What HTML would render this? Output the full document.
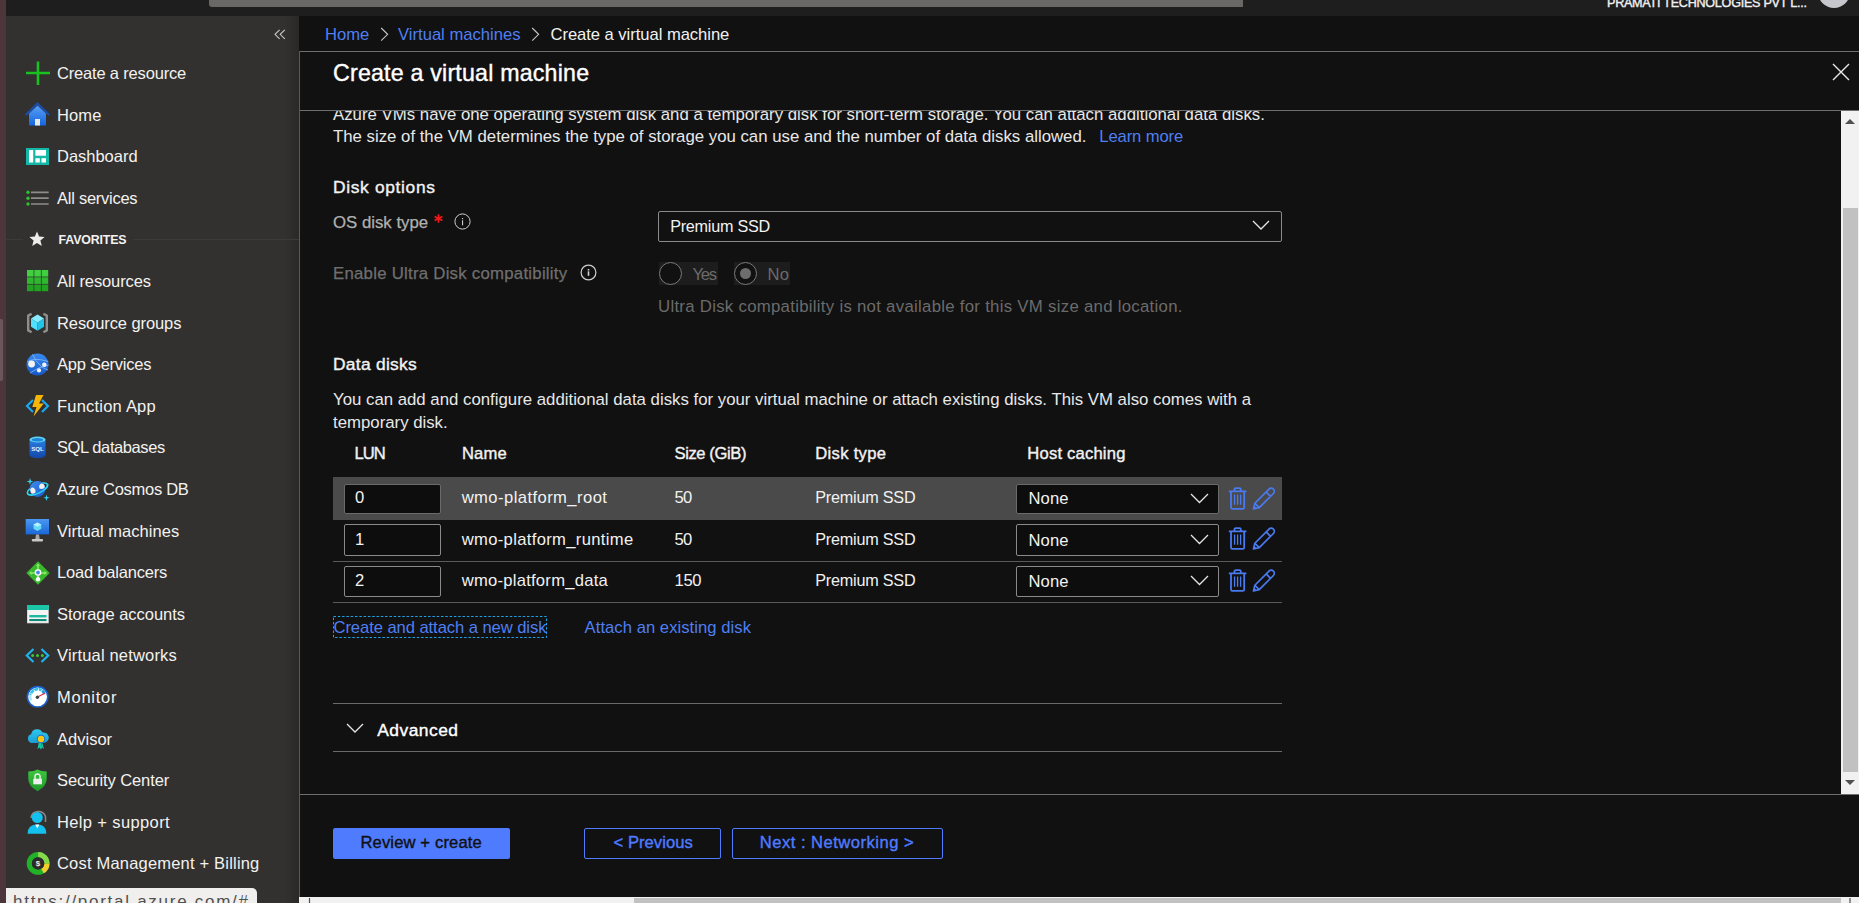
<!DOCTYPE html>
<html><head><meta charset="utf-8"><style>
html,body{margin:0;padding:0;width:1859px;height:903px;overflow:hidden;background:#111;}
body{position:relative;font-family:"Liberation Sans", sans-serif;}
.t{position:absolute;white-space:nowrap;}
.r{position:absolute;display:block;}
</style></head><body>
<div class="r" style="left:0px;top:0px;width:1859px;height:903px;background:#111111"></div>
<div class="r" style="left:0px;top:0px;width:6px;height:903px;background:#4d363b"></div>
<div class="r" style="left:0px;top:319px;width:3px;height:62px;background:#6a575b;border-radius:0 2px 2px 0"></div>
<div class="r" style="left:6px;top:0px;width:1853px;height:16px;background:#1e1e1e"></div>
<div class="r" style="left:209px;top:0px;width:1034px;height:7px;background:#696866;border-radius:0 0 0 3px"></div>
<div class="r" style="left:6px;top:16px;width:293px;height:887px;background:#32312f"></div>
<div class="r" style="left:285px;top:16px;width:14px;height:887px;background:linear-gradient(90deg,rgba(0,0,0,0),rgba(0,0,0,0.18))"></div>
<div class="t" style="left:1607px;top:-3.00px;font-size:12.6px;line-height:12.6px;color:#f0f0f0;-webkit-text-stroke:0.38px #f0f0f0;letter-spacing:-0.259px;">PRAMATI TECHNOLOGIES PVT L...</div>
<div class="r" style="left:1818px;top:-24px;width:32px;height:32px;border-radius:50%;background:#c5c7cc"></div>
<svg class="r" style="left:274px;top:29px" width="12" height="11" viewBox="0 0 12 11"><path d="M5.6 0.8 L1 5.3 L5.6 9.8 M10.8 0.8 L6.2 5.3 L10.8 9.8" fill="none" stroke="#c8c8c8" stroke-width="1.1"/></svg>
<div class="t" style="left:57px;top:65.00px;font-size:16.5px;line-height:16.5px;color:#f3f2f1;letter-spacing:-0.179px;">Create a resource</div>
<div class="t" style="left:57px;top:107.00px;font-size:16.5px;line-height:16.5px;color:#f3f2f1;letter-spacing:0.128px;">Home</div>
<div class="t" style="left:57px;top:148.00px;font-size:16.5px;line-height:16.5px;color:#f3f2f1;letter-spacing:-0.015px;">Dashboard</div>
<div class="t" style="left:57px;top:190.00px;font-size:16.5px;line-height:16.5px;color:#f3f2f1;letter-spacing:-0.258px;">All services</div>
<div class="t" style="left:58.6px;top:234.00px;font-size:12.4px;line-height:12.4px;color:#f2f2f2;font-weight:bold;letter-spacing:-0.170px;">FAVORITES</div>
<div class="t" style="left:57px;top:273.00px;font-size:16.5px;line-height:16.5px;color:#f3f2f1;letter-spacing:-0.114px;">All resources</div>
<div class="t" style="left:57px;top:315.00px;font-size:16.5px;line-height:16.5px;color:#f3f2f1;letter-spacing:-0.090px;">Resource groups</div>
<div class="t" style="left:57px;top:356.00px;font-size:16.5px;line-height:16.5px;color:#f3f2f1;letter-spacing:-0.256px;">App Services</div>
<div class="t" style="left:57px;top:398.00px;font-size:16.5px;line-height:16.5px;color:#f3f2f1;letter-spacing:0.216px;">Function App</div>
<div class="t" style="left:57px;top:439.00px;font-size:16.5px;line-height:16.5px;color:#f3f2f1;letter-spacing:-0.411px;">SQL databases</div>
<div class="t" style="left:57px;top:481.00px;font-size:16.5px;line-height:16.5px;color:#f3f2f1;letter-spacing:-0.279px;">Azure Cosmos DB</div>
<div class="t" style="left:57px;top:523.00px;font-size:16.5px;line-height:16.5px;color:#f3f2f1;letter-spacing:0.035px;">Virtual machines</div>
<div class="t" style="left:57px;top:564.00px;font-size:16.5px;line-height:16.5px;color:#f3f2f1;letter-spacing:-0.203px;">Load balancers</div>
<div class="t" style="left:57px;top:606.00px;font-size:16.5px;line-height:16.5px;color:#f3f2f1;letter-spacing:-0.028px;">Storage accounts</div>
<div class="t" style="left:57px;top:647.00px;font-size:16.5px;line-height:16.5px;color:#f3f2f1;letter-spacing:0.181px;">Virtual networks</div>
<div class="t" style="left:57px;top:689.00px;font-size:16.5px;line-height:16.5px;color:#f3f2f1;letter-spacing:0.730px;">Monitor</div>
<div class="t" style="left:57px;top:731.00px;font-size:16.5px;line-height:16.5px;color:#f3f2f1;letter-spacing:0.013px;">Advisor</div>
<div class="t" style="left:57px;top:772.00px;font-size:16.5px;line-height:16.5px;color:#f3f2f1;letter-spacing:-0.108px;">Security Center</div>
<div class="t" style="left:57px;top:814.00px;font-size:16.5px;line-height:16.5px;color:#f3f2f1;letter-spacing:0.371px;">Help + support</div>
<div class="t" style="left:57px;top:855.00px;font-size:16.5px;line-height:16.5px;color:#f3f2f1;letter-spacing:0.194px;">Cost Management + Billing</div>
<svg class="r" style="left:25px;top:60px" width="26" height="26" viewBox="0 0 26 26"><path d="M13 1.5 V25 M1 13 H25" stroke="#19c21e" stroke-width="2.6"/></svg>
<svg class="r" style="left:25px;top:102px" width="25" height="24" viewBox="0 0 25 24"><defs><linearGradient id="hg" x1="0" y1="0" x2="0" y2="1"><stop offset="0" stop-color="#5aa0f5"/><stop offset="1" stop-color="#1466e0"/></linearGradient></defs><path d="M4 11.5 L12.5 3.5 L21 11.5 V23.5 H4 Z" fill="url(#hg)"/><path d="M0.8 13 L12.5 1.5 L24.2 13" fill="none" stroke="#1a4fb0" stroke-width="2"/><rect x="10" y="17" width="5" height="6.5" fill="#e8e8e8"/></svg>
<svg class="r" style="left:26px;top:148px" width="23" height="17" viewBox="0 0 23 17"><rect x="0" y="0" width="23" height="17" fill="#14b8a6"/><rect x="3" y="2" width="4.2" height="12.5" fill="#fff"/><rect x="9.4" y="2" width="10.6" height="5.7" fill="#fff"/><rect x="9.4" y="10.2" width="4.4" height="4.3" fill="#fff"/><rect x="15.5" y="10.2" width="4.5" height="4.3" fill="#fff"/></svg>
<svg class="r" style="left:26px;top:190px" width="24" height="16" viewBox="0 0 24 16"><circle cx="2" cy="2.3" r="1.7" fill="#2ec02e"/><circle cx="2" cy="8.2" r="1.7" fill="#2ec02e"/><circle cx="2" cy="14" r="1.7" fill="#2ec02e"/><path d="M5 2.3 H22.7 M5 8.2 H22.7 M5 14 H22.7" stroke="#8c8c8c" stroke-width="1.7"/></svg>
<svg class="r" style="left:29px;top:231px" width="16" height="16" viewBox="0 0 16 16"><path d="M8 0.5 L10.1 5.6 L15.6 5.9 L11.4 9.4 L12.8 14.9 L8 11.9 L3.2 14.9 L4.6 9.4 L0.4 5.9 L5.9 5.6 Z" fill="#ececec"/></svg>
<svg class="r" style="left:26.8px;top:270px" width="22" height="22" viewBox="0 0 22 22"><rect x="0.0" y="0.0" width="6.6" height="6.6" fill="#3fcf3f"/><rect x="7.3" y="0.0" width="6.6" height="6.6" fill="#3fcf3f"/><rect x="14.6" y="0.0" width="6.6" height="6.6" fill="#3fcf3f"/><rect x="0.0" y="7.3" width="6.6" height="6.6" fill="#2fb82f"/><rect x="7.3" y="7.3" width="6.6" height="6.6" fill="#2fb82f"/><rect x="14.6" y="7.3" width="6.6" height="6.6" fill="#2fb82f"/><rect x="0.0" y="14.6" width="6.6" height="6.6" fill="#22a322"/><rect x="7.3" y="14.6" width="6.6" height="6.6" fill="#22a322"/><rect x="14.6" y="14.6" width="6.6" height="6.6" fill="#22a322"/></svg>
<svg class="r" style="left:26px;top:312px" width="23" height="22" viewBox="0 0 23 22"><path d="M5.6 1.8 L2.2 3.6 V18.4 L5.6 20.2 M17.4 1.8 L20.8 3.6 V18.4 L17.4 20.2" fill="none" stroke="#8e8e8e" stroke-width="2.4" stroke-linejoin="round"/><path d="M11.5 2.6 L18 6.6 L11.5 10.7 L5 6.6 Z" fill="#86ecff"/><path d="M5 6.6 L11.5 10.7 V18.8 L5 14.8 Z" fill="#50e0ff"/><path d="M18 6.6 L11.5 10.7 V18.8 L18 14.8 Z" fill="#22c3ea"/></svg>
<svg class="r" style="left:26px;top:353px" width="23" height="23" viewBox="0 0 23 23"><defs><linearGradient id="ag" x1="0" y1="0" x2="0" y2="1"><stop offset="0" stop-color="#3a8af0"/><stop offset="1" stop-color="#1558c8"/></linearGradient></defs><circle cx="11.5" cy="11.5" r="11" fill="url(#ag)"/><path d="M6.5 1.2 Q9 8 15 13 Q18 16 22 17 M1 9 Q8 4 22.3 8.5 M4 20 Q12 14 22.5 12" fill="none" stroke="#8cc0fa" stroke-width="1" opacity="0.75"/><circle cx="5.6" cy="11" r="3.4" fill="#f2f2f2"/><circle cx="18.3" cy="11.8" r="2.2" fill="#f2f2f2"/><circle cx="13" cy="17.4" r="2.1" fill="#f2f2f2"/></svg>
<svg class="r" style="left:25px;top:394px" width="25" height="24" viewBox="0 0 25 24"><path d="M8 6 L2 12 L8 18 M17 6 L23 12 L17 18" fill="none" stroke="#1aa9ef" stroke-width="2.2"/><path d="M11 1 H18.5 L14 9.5 H18.8 L8.5 22.5 L11.5 13 H7.3 Z" fill="#f5b60c"/></svg>
<svg class="r" style="left:29px;top:436px" width="17" height="23" viewBox="0 0 17 23"><defs><linearGradient id="sg" x1="0" y1="0" x2="0" y2="1"><stop offset="0" stop-color="#2a7fe0"/><stop offset="1" stop-color="#1346a8"/></linearGradient></defs><path d="M0.5 3.5 V19 A8 3.3 0 0 0 16.5 19 V3.5 Z" fill="url(#sg)"/><ellipse cx="8.5" cy="3.5" rx="8" ry="3" fill="#5fd2f5"/><ellipse cx="8.5" cy="3.8" rx="5.8" ry="1.8" fill="#1e86d8"/><text x="8.5" y="14.6" font-family="Liberation Sans" font-weight="bold" font-size="6.2" fill="#e8f0ff" text-anchor="middle">SQL</text></svg>
<svg class="r" style="left:25px;top:477px" width="25" height="25" viewBox="0 0 25 25"><defs><linearGradient id="cog" x1="0" y1="0" x2="1" y2="1"><stop offset="0" stop-color="#3c8ef0"/><stop offset="1" stop-color="#1a5cc8"/></linearGradient></defs><path d="M5 1 L5.8 3.7 L8.5 4.5 L5.8 5.3 L5 8 L4.2 5.3 L1.5 4.5 L4.2 3.7 Z" fill="#32d4f5"/><path d="M21.5 17.5 L22.2 20 L24.5 20.8 L22.2 21.6 L21.5 24 L20.8 21.6 L18.5 20.8 L20.8 20 Z" fill="#32d4f5"/><g transform="rotate(-25 12.5 12)"><ellipse cx="12.5" cy="12" rx="11" ry="4.2" fill="none" stroke="#2ad3f2" stroke-width="1.5"/></g><circle cx="12.5" cy="12" r="7.9" fill="url(#cog)"/><path d="M5.2 12.5 Q6.5 9.5 9 11 Q11 12.5 10.5 15.5 Q8 17.5 6 16 Z" fill="#f0f0f0"/><path d="M14 9 Q15.5 5.5 18.5 7 Q20.5 9 19.5 11 Q16.5 12.5 14.5 11.5 Z" fill="#f0f0f0"/><g transform="rotate(-25 12.5 12)"><path d="M1.5 12 A11 4.2 0 0 0 23.5 12" fill="none" stroke="#2ad3f2" stroke-width="1.5"/></g></svg>
<svg class="r" style="left:25px;top:518px" width="25" height="24" viewBox="0 0 25 24"><defs><linearGradient id="vg" x1="0" y1="0" x2="0" y2="1"><stop offset="0" stop-color="#4a98f2"/><stop offset="1" stop-color="#1a66d8"/></linearGradient></defs><rect x="0.7" y="1" width="23.3" height="15.4" fill="url(#vg)"/><path d="M11 16.4 H14 L14.8 21.5 H10.2 Z" fill="#a8a8a8"/><rect x="6.8" y="21" width="11.2" height="2.4" rx="0.8" fill="#c8c8c8"/><path d="M12.4 4.5 L16.3 6.6 V10.8 L12.4 12.9 L8.5 10.8 V6.6 Z" fill="#66d9f7"/><path d="M8.5 6.6 L12.4 8.7 L16.3 6.6 L12.4 4.5 Z" fill="#b5f0ff"/></svg>
<svg class="r" style="left:25.5px;top:561px" width="24" height="24" viewBox="0 0 24 24"><path d="M12 0.3 L23.7 12 L12 23.7 L0.3 12 Z" fill="#38b82c"/><path d="M12 3.5 V9 M4 12 H9 M15 12 H20" stroke="#8ee86a" stroke-width="1.6"/><path d="M12 2.5 L10 5 H14 Z M3 12 L5.5 10 V14 Z M21 12 L18.5 10 V14 Z" fill="#8ee86a"/><circle cx="12" cy="11.5" r="3.3" fill="#fff"/><circle cx="12" cy="11.5" r="1.9" fill="#4a86e8"/><path d="M12 14.5 V17" stroke="#fff" stroke-width="1.2"/><circle cx="12" cy="18.3" r="2.2" fill="#fff"/></svg>
<svg class="r" style="left:26.6px;top:605px" width="22" height="19" viewBox="0 0 22 19"><rect x="0" y="0" width="21.8" height="18.3" fill="#cfcfcf"/><rect x="0.8" y="5" width="20.2" height="12.6" fill="#f4f4f4"/><rect x="0" y="0" width="21.8" height="5" fill="#1bc6a8"/><rect x="2.3" y="10" width="17.2" height="2.4" fill="#1ab9a0"/><rect x="2.3" y="14" width="17.2" height="2.1" fill="#0f8a78"/></svg>
<svg class="r" style="left:25px;top:648px" width="25" height="15" viewBox="0 0 25 15"><path d="M8.5 1 L1.8 7.5 L8.5 14 M16.5 1 L23.2 7.5 L16.5 14" fill="none" stroke="#1db4ee" stroke-width="2.2"/><circle cx="7.6" cy="7.5" r="1.5" fill="#3cc83c"/><circle cx="12.5" cy="7.5" r="1.5" fill="#3cc83c"/><circle cx="17.4" cy="7.5" r="1.5" fill="#3cc83c"/></svg>
<svg class="r" style="left:26px;top:685px" width="23" height="23" viewBox="0 0 23 23"><circle cx="11.6" cy="11.8" r="10.2" fill="#fff" stroke="#1a62d2" stroke-width="1.6"/><path d="M11.6 11.8 L3.2 9.8 A8.6 8.6 0 0 1 16.5 4.3 Z" fill="#38c0e8"/><path d="M11.6 11.8 L3.2 9.8 A8.6 8.6 0 0 0 4.2 16 Z" fill="#a8e4f5"/><path d="M11.6 11.8 L16.5 4.3 A8.6 8.6 0 0 1 19.8 8.5 Z" fill="#1c9ad6"/><path d="M4.5 8.5 L11.6 11.8 M8 5 L11.6 11.8 M12.5 3.5 L11.6 11.8 M16.5 4.5 L11.6 11.8" stroke="#fff" stroke-width="0.9"/><circle cx="11.6" cy="11.8" r="6.2" fill="#fff"/><path d="M11.6 12 L18.8 8.2" stroke="#e8304a" stroke-width="1.3"/><circle cx="11.4" cy="12.2" r="1.7" fill="#444"/></svg>
<svg class="r" style="left:26.5px;top:727.5px" width="22" height="22" viewBox="0 0 22 22"><defs><linearGradient id="cg" x1="0" y1="0" x2="0" y2="1"><stop offset="0" stop-color="#2ec8ef"/><stop offset="1" stop-color="#1a9fd6"/></linearGradient></defs><path d="M5 15 A4.5 4.5 0 0 1 4.2 6.2 A6 6 0 0 1 15.5 4.5 A5 5 0 0 1 17.5 14.8 Z" fill="url(#cg)"/><path d="M12 13.5 L10.5 21 L12.6 19.5 L14 21.5 L14.5 14 Z M15 13.5 L17 21 L15.3 19.6 L14 21.5 Z" fill="#17c7a8"/><circle cx="14" cy="11" r="4.3" fill="#1f6fd0"/><circle cx="14" cy="11" r="3.2" fill="#ffc60a"/></svg>
<svg class="r" style="left:28px;top:769px" width="19" height="23" viewBox="0 0 19 23"><defs><linearGradient id="shg" x1="0" y1="0" x2="0" y2="1"><stop offset="0" stop-color="#3cc83c"/><stop offset="1" stop-color="#1e9a2a"/></linearGradient></defs><path d="M9.5 0.5 Q13 2.5 18.7 2.5 V10 Q18.7 17 9.5 22.2 Q0.3 17 0.3 10 V2.5 Q6 2.5 9.5 0.5 Z" fill="url(#shg)"/><path d="M7 10 V7.6 A2.55 2.55 0 0 1 12.1 7.6 V10" fill="none" stroke="#eee" stroke-width="1.5"/><rect x="5.3" y="9.7" width="8.6" height="5.6" fill="#eee"/></svg>
<svg class="r" style="left:27px;top:809px" width="20" height="26" viewBox="0 0 20 26"><path d="M4 9 A7.5 7.5 0 0 1 18.5 7.5 V13" fill="none" stroke="#8a8a8a" stroke-width="1.5"/><circle cx="10.3" cy="8.5" r="5.5" fill="#14c0ee"/><path d="M0.6 24.8 Q0.6 15.5 10.3 15.5 Q19.3 15.5 19.3 24.8 Z" fill="#14c0ee"/><path d="M8.3 15.6 L10.3 19.5 L12.3 15.6 Z" fill="#fff"/></svg>
<svg class="r" style="left:25.5px;top:851px" width="24" height="25" viewBox="0 0 24 25"><circle cx="12.1" cy="12.4" r="8.8" fill="none" stroke="#22b22a" stroke-width="5.2"/><path d="M12.1 3.6 A8.8 8.8 0 0 1 20.9 12.4" fill="none" stroke="#86d94a" stroke-width="5.2"/><path d="M20.9 12.4 A8.8 8.8 0 0 1 16.5 20" fill="none" stroke="#f2cf2a" stroke-width="5.2"/><circle cx="12.1" cy="12.4" r="6.2" fill="#2a2a2a"/><text x="12.1" y="15.4" font-family="Liberation Sans" font-weight="bold" font-size="8" fill="#f0f0f0" text-anchor="middle">$</text></svg>
<div class="r" style="left:6px;top:239px;width:17px;height:1px;background:#3c3b39"></div>
<div class="r" style="left:133px;top:239px;width:166px;height:1px;background:#3c3b39"></div>
<div class="t" style="left:325px;top:27.00px;font-size:16.6px;line-height:16.6px;color:#4f7ff2;letter-spacing:0.006px;">Home</div>
<svg class="r" style="left:380px;top:27px" width="9" height="15" viewBox="0 0 9 15"><path d="M1.2 1 L7.6 7.3 L1.2 13.6" fill="none" stroke="#c8c8c8" stroke-width="1.1"/></svg>
<div class="t" style="left:398px;top:27.00px;font-size:16.6px;line-height:16.6px;color:#4f7ff2;letter-spacing:0.012px;">Virtual machines</div>
<svg class="r" style="left:531px;top:27px" width="9" height="15" viewBox="0 0 9 15"><path d="M1.2 1 L7.6 7.3 L1.2 13.6" fill="none" stroke="#c8c8c8" stroke-width="1.1"/></svg>
<div class="t" style="left:550.5px;top:27.00px;font-size:16.6px;line-height:16.6px;color:#f2f2f2;letter-spacing:-0.044px;">Create a virtual machine</div>
<div class="r" style="left:299px;top:51px;width:1560px;height:1px;background:#6e6e6e"></div>
<div class="r" style="left:299px;top:51px;width:1px;height:852px;background:#5a5a5a"></div>
<div class="r" style="left:300px;top:110px;width:1559px;height:1px;background:#6e6e6e"></div>
<div class="t" style="left:333px;top:62.00px;font-size:23.2px;line-height:23.2px;color:#ffffff;-webkit-text-stroke:0.38px #ffffff;letter-spacing:0.206px;">Create a virtual machine</div>
<svg class="r" style="left:1832px;top:63px" width="18" height="18" viewBox="0 0 18 18"><path d="M1 1 L17 17 M17 1 L1 17" stroke="#e8e8e8" stroke-width="1.4"/></svg>
<div class="r" style="left:300px;top:111px;width:1559px;height:683px;overflow:hidden">
<div class="t" style="left:33px;top:-4.00px;font-size:16.8px;line-height:16.8px;color:#e8e8e8;letter-spacing:0.008px;">Azure VMs have one operating system disk and a temporary disk for short-term storage. You can attach additional data disks.</div>
<div class="t" style="left:33px;top:18.00px;font-size:16.8px;line-height:16.8px;color:#e8e8e8;letter-spacing:-0.003px;">The size of the VM determines the type of storage you can use and the number of data disks allowed.</div>
<div class="t" style="left:799.3px;top:18.00px;font-size:16.6px;line-height:16.6px;color:#4f7ff2;letter-spacing:-0.110px;">Learn more</div>
<div class="t" style="left:33px;top:68.00px;font-size:17.4px;line-height:17.4px;color:#f2f2f2;-webkit-text-stroke:0.38px #f2f2f2;letter-spacing:0.657px;">Disk options</div>
<div class="t" style="left:33px;top:104.00px;font-size:16.8px;line-height:16.8px;color:#b0b0b0;-webkit-text-stroke:0.25px #b0b0b0;letter-spacing:-0.004px;">OS disk type</div>
<svg class="r" style="left:134px;top:103px" width="9" height="9" viewBox="0 0 9 9"><path d="M4.5 0.3 V8.7 M0.6 2.4 L8.4 6.6 M8.4 2.4 L0.6 6.6" stroke="#f01818" stroke-width="1.7"/></svg>
<svg class="r" style="left:154.0px;top:102.0px" width="17" height="17" viewBox="0 0 17 17"><circle cx="8.5" cy="8.5" r="7.6" fill="none" stroke="#d0d0d0" stroke-width="1"/><rect x="8" y="5" width="1.1" height="1.2" fill="#d0d0d0"/><rect x="8" y="7.3" width="1.1" height="5" fill="#d0d0d0"/></svg>
<div class="r" style="left:358px;top:100px;width:624px;height:31px;box-sizing:border-box;border:1px solid #8a8a8a;border-radius:2px;background:#111"></div>
<div class="t" style="left:370.20000000000005px;top:107.00px;font-size:16.2px;line-height:16.2px;color:#f2f2f2;letter-spacing:-0.252px;">Premium SSD</div>
<svg class="r" style="left:952px;top:109px" width="18" height="11" viewBox="0 0 18 11"><path d="M1 1 L9 9 L17 1" fill="none" stroke="#e6e6e6" stroke-width="1.3"/></svg>
<div class="t" style="left:33px;top:155.00px;font-size:16.8px;line-height:16.8px;color:#6f6f6f;-webkit-text-stroke:0.25px #6f6f6f;letter-spacing:0.250px;">Enable Ultra Disk compatibility</div>
<svg class="r" style="left:279.5px;top:152.5px" width="17" height="17" viewBox="0 0 17 17"><circle cx="8.5" cy="8.5" r="7.4" fill="none" stroke="#d0d0d0" stroke-width="1.2"/><rect x="7.7" y="5" width="1.6" height="1.5" fill="#d0d0d0"/><rect x="7.7" y="7.3" width="1.6" height="4.5" fill="#d0d0d0"/></svg>
<div class="r" style="left:359px;top:151px;width:59px;height:23px;background:#1d1d1d"></div>
<div class="r" style="left:434px;top:151px;width:56px;height:23px;background:#1d1d1d"></div>
<div class="r" style="left:359px;top:151px;width:23px;height:23px;box-sizing:border-box;border:1px solid #7a7a7a;border-radius:50%;background:#111"></div>
<div class="r" style="left:434px;top:151px;width:23px;height:23px;box-sizing:border-box;border:1px solid #7a7a7a;border-radius:50%;background:#111"></div>
<div class="r" style="left:440px;top:157px;width:11px;height:11px;border-radius:50%;background:#6e6e6e"></div>
<div class="t" style="left:392.6px;top:156.00px;font-size:16.6px;line-height:16.6px;color:#6b6b6b;letter-spacing:-1.341px;">Yes</div>
<div class="t" style="left:467.4px;top:156.00px;font-size:16.6px;line-height:16.6px;color:#6b6b6b;letter-spacing:0.379px;">No</div>
<div class="t" style="left:358px;top:188.00px;font-size:16.8px;line-height:16.8px;color:#6b6b6b;letter-spacing:0.280px;">Ultra Disk compatibility is not available for this VM size and location.</div>
<div class="t" style="left:33px;top:245.00px;font-size:17.4px;line-height:17.4px;color:#f2f2f2;-webkit-text-stroke:0.38px #f2f2f2;letter-spacing:0.285px;">Data disks</div>
<div class="t" style="left:33px;top:281.00px;font-size:16.8px;line-height:16.8px;color:#e8e8e8;letter-spacing:0.001px;">You can add and configure additional data disks for your virtual machine or attach existing disks. This VM also comes with a</div>
<div class="t" style="left:33px;top:304.00px;font-size:16.8px;line-height:16.8px;color:#e8e8e8;letter-spacing:-0.003px;">temporary disk.</div>
<div class="t" style="left:54.5px;top:335.00px;font-size:16.6px;line-height:16.6px;color:#f2f2f2;-webkit-text-stroke:0.38px #f2f2f2;letter-spacing:-1.005px;">LUN</div>
<div class="t" style="left:162px;top:335.00px;font-size:16.6px;line-height:16.6px;color:#f2f2f2;-webkit-text-stroke:0.38px #f2f2f2;letter-spacing:0.139px;">Name</div>
<div class="t" style="left:374.5px;top:335.00px;font-size:16.6px;line-height:16.6px;color:#f2f2f2;-webkit-text-stroke:0.38px #f2f2f2;letter-spacing:-0.404px;">Size (GiB)</div>
<div class="t" style="left:515.3px;top:335.00px;font-size:16.6px;line-height:16.6px;color:#f2f2f2;-webkit-text-stroke:0.38px #f2f2f2;letter-spacing:0.304px;">Disk type</div>
<div class="t" style="left:727.3px;top:335.00px;font-size:16.6px;line-height:16.6px;color:#f2f2f2;-webkit-text-stroke:0.38px #f2f2f2;letter-spacing:0.194px;">Host caching</div>
<div class="r" style="left:33px;top:366px;width:949px;height:43px;background:#4a4a4a"></div>
<div class="r" style="left:33px;top:450px;width:949px;height:1px;background:#5a5a5a"></div>
<div class="r" style="left:33px;top:491px;width:949px;height:1px;background:#5a5a5a"></div>
<div class="r" style="left:43.5px;top:373px;width:97px;height:30px;box-sizing:border-box;border:1px solid #6a6a6a;border-radius:2px;background:#0d0d0d"></div>
<div class="t" style="left:55px;top:379.00px;font-size:16.6px;line-height:16.6px;color:#f2f2f2;">0</div>
<div class="t" style="left:161.7px;top:379.00px;font-size:16.6px;line-height:16.6px;color:#f2f2f2;letter-spacing:0.432px;">wmo-platform_root</div>
<div class="t" style="left:374.5px;top:379.00px;font-size:16.6px;line-height:16.6px;color:#f2f2f2;letter-spacing:-0.765px;">50</div>
<div class="t" style="left:515.3px;top:378.00px;font-size:16.2px;line-height:16.2px;color:#f2f2f2;letter-spacing:-0.222px;">Premium SSD</div>
<div class="r" style="left:716px;top:373px;width:203px;height:30px;box-sizing:border-box;border:1px solid #6a6a6a;border-radius:2px;background:#0d0d0d"></div>
<div class="t" style="left:728.5999999999999px;top:380.00px;font-size:16.6px;line-height:16.6px;color:#f2f2f2;letter-spacing:0.038px;">None</div>
<svg class="r" style="left:890px;top:381.5px" width="19" height="11" viewBox="0 0 19 11"><path d="M1 1 L9.5 9.5 L18 1" fill="none" stroke="#e6e6e6" stroke-width="1.3"/></svg>
<svg class="r" style="left:928px;top:373px" width="20" height="26" viewBox="0 0 20 26"><path d="M0.8 7.4 H18.4 M6.4 7.4 V5.6 Q6.4 4.2 7.8 4.2 H11.4 Q12.8 4.2 12.8 5.6 V7.4" fill="none" stroke="#4a7af0" stroke-width="1.8"/><path d="M3 7.4 V23.4 Q3 24.8 4.4 24.8 H14.8 Q16.2 24.8 16.2 23.4 V7.4" fill="none" stroke="#4a7af0" stroke-width="1.8"/><path d="M6.6 10.4 V20.8 M9.6 10.4 V20.8 M12.6 10.4 V20.8" stroke="#4a7af0" stroke-width="1.3"/></svg>
<svg class="r" style="left:952px;top:374px" width="24" height="26" viewBox="0 0 24 26"><path d="M1.5 24 L2.85 18.27 L17.0 4.1 A3.1 3.1 0 0 1 21.4 8.5 L7.23 22.65 Z M2.85 18.27 L7.23 22.65 M14.16 6.96 L18.54 11.34" fill="none" stroke="#4a7af0" stroke-width="1.7" stroke-linejoin="round"/><path d="M1.3 24.2 L2.1 20.6 L4.9 23.4 Z" fill="#4a7af0"/></svg>
<div class="r" style="left:43.5px;top:413px;width:97px;height:32px;box-sizing:border-box;border:1px solid #8a8a8a;border-radius:2px;background:#0d0d0d"></div>
<div class="t" style="left:55px;top:421.00px;font-size:16.6px;line-height:16.6px;color:#f2f2f2;">1</div>
<div class="t" style="left:161.7px;top:421.00px;font-size:16.6px;line-height:16.6px;color:#f2f2f2;letter-spacing:0.340px;">wmo-platform_runtime</div>
<div class="t" style="left:374.5px;top:421.00px;font-size:16.6px;line-height:16.6px;color:#f2f2f2;letter-spacing:-0.765px;">50</div>
<div class="t" style="left:515.3px;top:420.00px;font-size:16.2px;line-height:16.2px;color:#f2f2f2;letter-spacing:-0.222px;">Premium SSD</div>
<div class="r" style="left:716px;top:413px;width:203px;height:32px;box-sizing:border-box;border:1px solid #8a8a8a;border-radius:2px;background:#0d0d0d"></div>
<div class="t" style="left:728.5999999999999px;top:422.00px;font-size:16.6px;line-height:16.6px;color:#f2f2f2;letter-spacing:0.038px;">None</div>
<svg class="r" style="left:890px;top:422.5px" width="19" height="11" viewBox="0 0 19 11"><path d="M1 1 L9.5 9.5 L18 1" fill="none" stroke="#e6e6e6" stroke-width="1.3"/></svg>
<svg class="r" style="left:928px;top:413px" width="20" height="26" viewBox="0 0 20 26"><path d="M0.8 7.4 H18.4 M6.4 7.4 V5.6 Q6.4 4.2 7.8 4.2 H11.4 Q12.8 4.2 12.8 5.6 V7.4" fill="none" stroke="#4a7af0" stroke-width="1.8"/><path d="M3 7.4 V23.4 Q3 24.8 4.4 24.8 H14.8 Q16.2 24.8 16.2 23.4 V7.4" fill="none" stroke="#4a7af0" stroke-width="1.8"/><path d="M6.6 10.4 V20.8 M9.6 10.4 V20.8 M12.6 10.4 V20.8" stroke="#4a7af0" stroke-width="1.3"/></svg>
<svg class="r" style="left:952px;top:414px" width="24" height="26" viewBox="0 0 24 26"><path d="M1.5 24 L2.85 18.27 L17.0 4.1 A3.1 3.1 0 0 1 21.4 8.5 L7.23 22.65 Z M2.85 18.27 L7.23 22.65 M14.16 6.96 L18.54 11.34" fill="none" stroke="#4a7af0" stroke-width="1.7" stroke-linejoin="round"/><path d="M1.3 24.2 L2.1 20.6 L4.9 23.4 Z" fill="#4a7af0"/></svg>
<div class="r" style="left:43.5px;top:455px;width:97px;height:31px;box-sizing:border-box;border:1px solid #8a8a8a;border-radius:2px;background:#0d0d0d"></div>
<div class="t" style="left:55px;top:462.00px;font-size:16.6px;line-height:16.6px;color:#f2f2f2;">2</div>
<div class="t" style="left:161.7px;top:462.00px;font-size:16.6px;line-height:16.6px;color:#f2f2f2;letter-spacing:0.251px;">wmo-platform_data</div>
<div class="t" style="left:374.5px;top:462.00px;font-size:16.6px;line-height:16.6px;color:#f2f2f2;letter-spacing:-0.349px;">150</div>
<div class="t" style="left:515.3px;top:461.00px;font-size:16.2px;line-height:16.2px;color:#f2f2f2;letter-spacing:-0.222px;">Premium SSD</div>
<div class="r" style="left:716px;top:455px;width:203px;height:31px;box-sizing:border-box;border:1px solid #8a8a8a;border-radius:2px;background:#0d0d0d"></div>
<div class="t" style="left:728.5999999999999px;top:463.00px;font-size:16.6px;line-height:16.6px;color:#f2f2f2;letter-spacing:0.038px;">None</div>
<svg class="r" style="left:890px;top:464.0px" width="19" height="11" viewBox="0 0 19 11"><path d="M1 1 L9.5 9.5 L18 1" fill="none" stroke="#e6e6e6" stroke-width="1.3"/></svg>
<svg class="r" style="left:928px;top:455px" width="20" height="26" viewBox="0 0 20 26"><path d="M0.8 7.4 H18.4 M6.4 7.4 V5.6 Q6.4 4.2 7.8 4.2 H11.4 Q12.8 4.2 12.8 5.6 V7.4" fill="none" stroke="#4a7af0" stroke-width="1.8"/><path d="M3 7.4 V23.4 Q3 24.8 4.4 24.8 H14.8 Q16.2 24.8 16.2 23.4 V7.4" fill="none" stroke="#4a7af0" stroke-width="1.8"/><path d="M6.6 10.4 V20.8 M9.6 10.4 V20.8 M12.6 10.4 V20.8" stroke="#4a7af0" stroke-width="1.3"/></svg>
<svg class="r" style="left:952px;top:456px" width="24" height="26" viewBox="0 0 24 26"><path d="M1.5 24 L2.85 18.27 L17.0 4.1 A3.1 3.1 0 0 1 21.4 8.5 L7.23 22.65 Z M2.85 18.27 L7.23 22.65 M14.16 6.96 L18.54 11.34" fill="none" stroke="#4a7af0" stroke-width="1.7" stroke-linejoin="round"/><path d="M1.3 24.2 L2.1 20.6 L4.9 23.4 Z" fill="#4a7af0"/></svg>
<svg class="r" style="left:33px;top:505px" width="214" height="22" viewBox="0 0 214 22"><rect x="0.5" y="0.5" width="213" height="21" fill="none" stroke="#1aa3e8" stroke-width="1" stroke-dasharray="2.5 1.8"/></svg>
<div class="t" style="left:33.5px;top:509.00px;font-size:16.6px;line-height:16.6px;color:#4f7ff2;letter-spacing:-0.074px;">Create and attach a new disk</div>
<div class="t" style="left:284.6px;top:509.00px;font-size:16.6px;line-height:16.6px;color:#4f7ff2;letter-spacing:0.056px;">Attach an existing disk</div>
<div class="r" style="left:33px;top:592px;width:949px;height:1px;background:#6a6a6a"></div>
<div class="r" style="left:33px;top:640px;width:949px;height:1px;background:#6a6a6a"></div>
<svg class="r" style="left:46px;top:612px" width="18" height="11" viewBox="0 0 18 11"><path d="M1 1 L9 9 L17 1" fill="none" stroke="#e6e6e6" stroke-width="1.3"/></svg>
<div class="t" style="left:77.30000000000001px;top:611.00px;font-size:17.4px;line-height:17.4px;color:#ffffff;-webkit-text-stroke:0.38px #ffffff;letter-spacing:0.472px;">Advanced</div>
<div class="r" style="left:1541px;top:0px;width:18px;height:683px;background:#f1f1f1"></div>
<div class="r" style="left:1543px;top:96.5px;width:15px;height:564.5px;background:#c1c1c1"></div>
<svg class="r" style="left:1544px;top:6px" width="12" height="8" viewBox="0 0 12 8"><path d="M1 7 L6 2 L11 7 Z" fill="#505050"/></svg>
<svg class="r" style="left:1544px;top:668px" width="12" height="8" viewBox="0 0 12 8"><path d="M1 1 L6 6 L11 1 Z" fill="#505050"/></svg>
</div>
<div class="r" style="left:300px;top:794px;width:1559px;height:1px;background:#6e6e6e"></div>
<div class="r" style="left:333px;top:828px;width:177px;height:31px;background:#4f7bff;border-radius:2px"></div>
<div class="t" style="left:360.4px;top:835.00px;font-size:16.6px;line-height:16.6px;color:#111111;-webkit-text-stroke:0.38px #111111;letter-spacing:0.137px;">Review + create</div>
<div class="r" style="left:584px;top:828px;width:137px;height:31px;box-sizing:border-box;border:1px solid #4f7bff;border-radius:2px"></div>
<div class="t" style="left:613.5px;top:835.00px;font-size:16.6px;line-height:16.6px;color:#4f7bff;-webkit-text-stroke:0.38px #4f7bff;letter-spacing:0.045px;">&lt; Previous</div>
<div class="r" style="left:732px;top:828px;width:211px;height:31px;box-sizing:border-box;border:1px solid #4f7bff;border-radius:2px"></div>
<div class="t" style="left:759.8px;top:835.00px;font-size:16.6px;line-height:16.6px;color:#4f7bff;-webkit-text-stroke:0.38px #4f7bff;letter-spacing:0.477px;">Next : Networking &gt;</div>
<div class="r" style="left:299px;top:897px;width:1560px;height:6px;background:#f1f1f1"></div>
<div class="r" style="left:634px;top:898px;width:1207px;height:5px;background:#c1c1c1"></div>
<svg class="r" style="left:306px;top:898px" width="8" height="5" viewBox="0 0 8 5"><path d="M3.5 0 V5" stroke="#505050" stroke-width="1.2"/></svg>
<svg class="r" style="left:1846px;top:898px" width="8" height="5" viewBox="0 0 8 5"><path d="M4 0 V5" stroke="#505050" stroke-width="1.2"/></svg>
<div class="r" style="left:6px;top:888px;width:251px;height:15px;background:#f0efed;border-radius:0 5px 0 0"></div>
<div class="t" style="left:13px;top:893.00px;font-size:17.0px;line-height:17.0px;color:#505050;letter-spacing:1.727px;">https://portal.azure.com/#</div>
</body></html>
